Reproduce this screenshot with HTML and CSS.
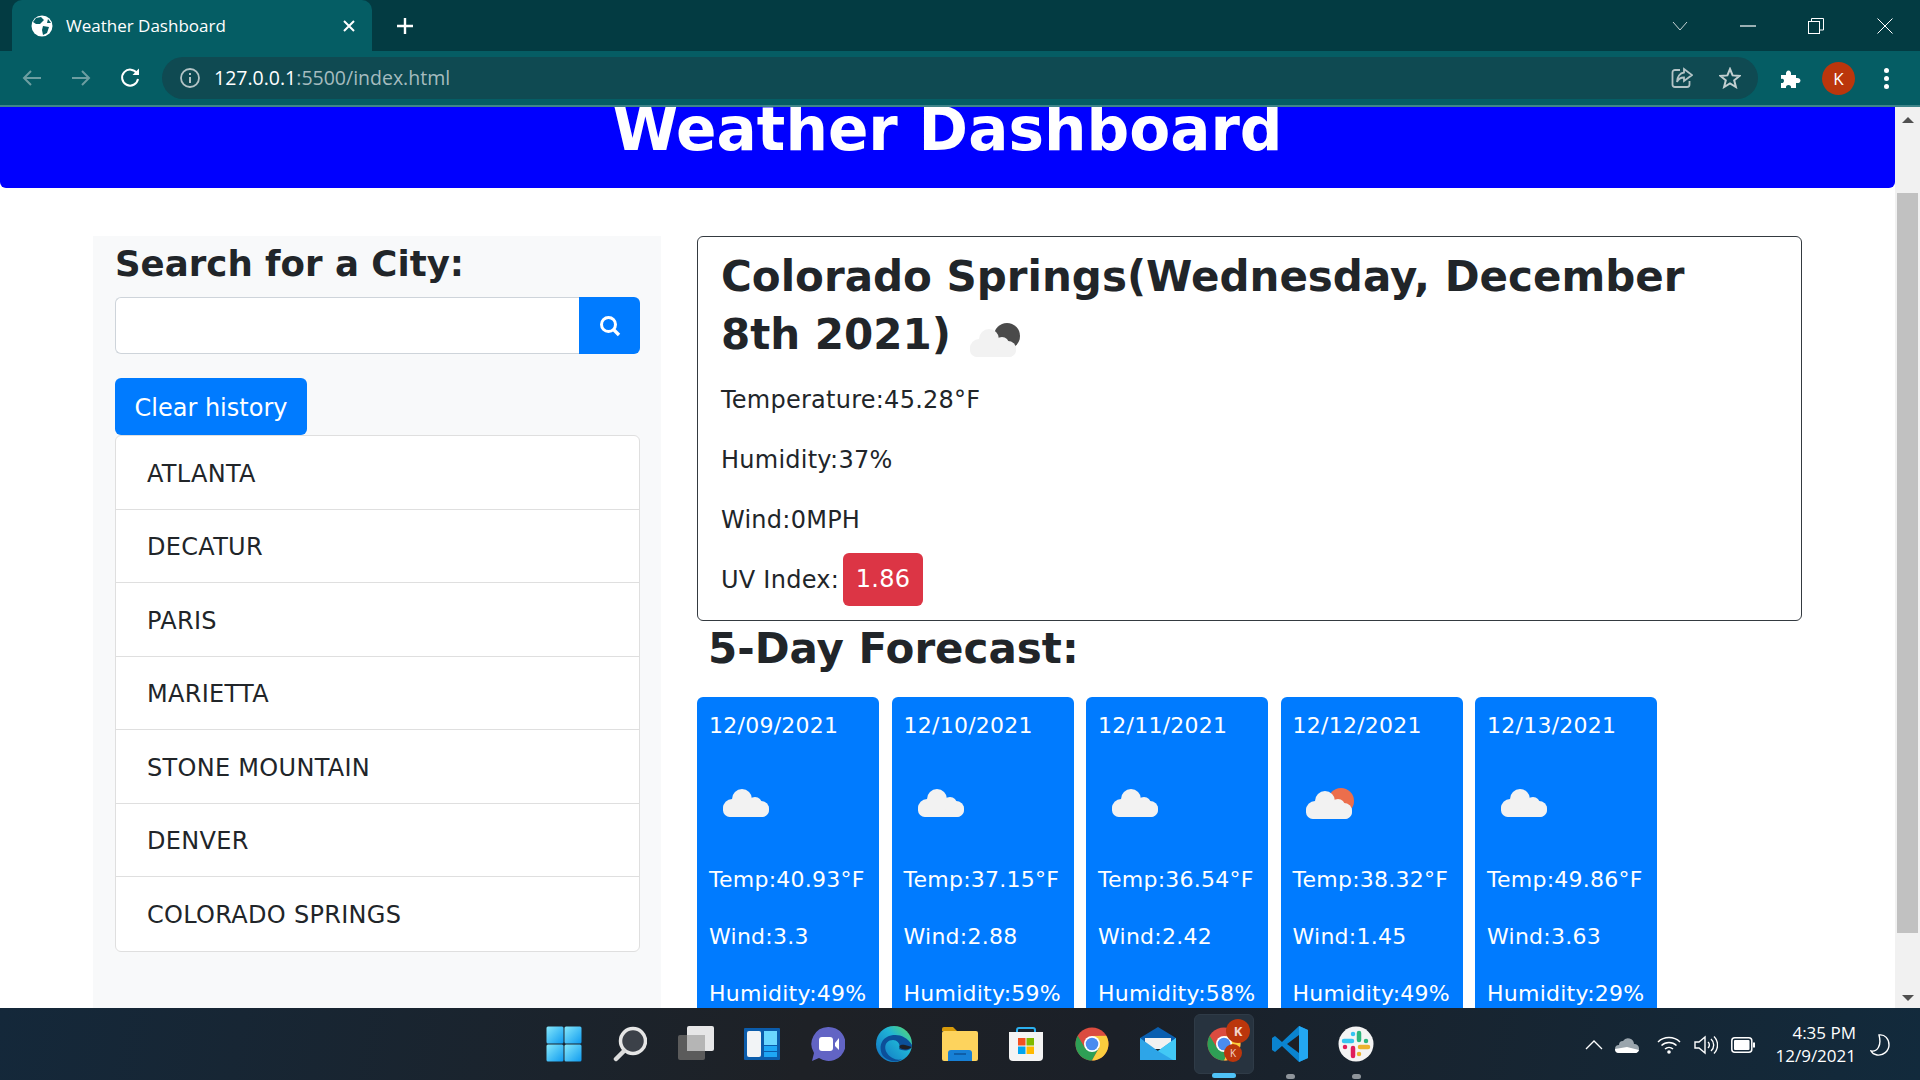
FILE: index.html
```html
<!DOCTYPE html>
<html lang="en">
<head>
    <meta charset="UTF-8">
    <title>Weather Dashboard</title>
    <link rel="stylesheet" href="styles.css">
</head>
<body>
    <svg class="defs" width="0" height="0">
        <defs>
            <g id="cloud">
                <rect x="0" y="13" width="46" height="15" rx="7"/>
                <circle cx="9" cy="19" r="9"/>
                <circle cx="19" cy="10" r="10"/>
                <circle cx="32" cy="15" r="7"/>
                <circle cx="38" cy="20" r="8"/>
            </g>
            <g id="chrome-logo">
                <circle cx="17" cy="17" r="16.5" fill="#db4c3f"/>
                <path d="M2.7 8.8 A16.5 16.5 0 0 0 17 33.5 L24 21 L10 21 Z" fill="#2e9f55"/>
                <path d="M31.3 8.8 A16.5 16.5 0 0 1 17 33.5 L24 21 L17 9 Z" fill="#fbcd3e"/>
                <circle cx="17" cy="17" r="8" fill="#fff"/>
                <circle cx="17" cy="17" r="6.3" fill="#4a8cf0"/>
            </g>
            <linearGradient id="win-grad" x1="0" y1="0" x2="1" y2="1">
                <stop offset="0" stop-color="#85e8fb"/>
                <stop offset="1" stop-color="#0f9bf0"/>
            </linearGradient>
            <linearGradient id="edge-grad" x1="0" y1="1" x2="1" y2="0">
                <stop offset="0" stop-color="#0f6cc0"/>
                <stop offset="0.6" stop-color="#1fb3d6"/>
                <stop offset="1" stop-color="#5fdc62"/>
            </linearGradient>
        </defs>
    </svg>

    <div class="tabstrip">
        <div class="tab">
            <svg class="tab-globe" width="22" height="22" viewBox="0 0 22 22">
                <circle cx="11" cy="11" r="10.5" fill="#fff"/>
                <path d="M5 3 L10 2 L13 5 L9 9 L5 9 L2 7 Z M12 11 L18 12 L16 18 L12 20 L11 15 Z M17 4 L20 8 L16 8 Z" fill="#055d64"/>
            </svg>
            <span class="tab-title">Weather Dashboard</span>
            <svg class="tab-close" width="12" height="12" viewBox="0 0 12 12"><path d="M1 1 L11 11 M11 1 L1 11" stroke="#fff" stroke-width="2"/></svg>
        </div>
        <svg class="new-tab" width="18" height="18" viewBox="0 0 18 18"><path d="M9 1 V17 M1 9 H17" stroke="#fff" stroke-width="2.4"/></svg>
        <div class="window-btns">
            <svg width="16" height="10" viewBox="0 0 16 10"><path d="M1 1 L8 9 L15 1" fill="none" stroke="#c8d4d6" stroke-width="1"/></svg>
            <svg class="win-min" width="16" height="2" viewBox="0 0 16 2"><path d="M0 1 H16" stroke="#fff" stroke-width="1.2"/></svg>
            <svg class="win-max" width="16" height="16" viewBox="0 0 16 16"><rect x="0.5" y="3.5" width="11" height="12" fill="none" stroke="#fff"/><path d="M3.5 3 V0.5 H15.5 V12 H12" fill="none" stroke="#fff"/></svg>
            <svg class="win-close" width="16" height="16" viewBox="0 0 16 16"><path d="M0.5 0.5 L15.5 15.5 M15.5 0.5 L0.5 15.5" stroke="#fff" stroke-width="1"/></svg>
        </div>
    </div>

    <div class="toolbar">
        <svg class="nav-btn" width="20" height="18" viewBox="0 0 20 18"><path d="M19 9 H2 M9 2 L2 9 L9 16" fill="none" stroke="#6d9ea1" stroke-width="2"/></svg>
        <svg class="nav-btn" width="20" height="18" viewBox="0 0 20 18"><path d="M1 9 H18 M11 2 L18 9 L11 16" fill="none" stroke="#6d9ea1" stroke-width="2"/></svg>
        <svg class="nav-btn" width="20" height="20" viewBox="0 0 20 20"><path d="M17 5.5 A8 8 0 1 0 18 11" fill="none" stroke="#fff" stroke-width="2"/><path d="M12.5 7 H19 V0.5 Z" fill="#fff"/></svg>
        <div class="omnibox">
            <svg width="20" height="20" viewBox="0 0 20 20"><circle cx="10" cy="10" r="9" fill="none" stroke="#b3c4c6" stroke-width="1.8"/><path d="M10 9 V15 M10 5 V7" stroke="#b3c4c6" stroke-width="2"/></svg>
            <span class="url"><span class="url-host">127.0.0.1</span>:5500/index.html</span>
            <svg class="omni-share" width="22" height="22" viewBox="0 0 22 22"><path d="M9 3 H4 A2.5 2.5 0 0 0 1.5 5.500 V17.500 A2.5 2.500 0 0 0 4 20 H16 A2.500 2.500 0 0 0 18.500 17.500 V14" fill="none" stroke="#b3c4c6" stroke-width="1.800"/><path d="M13 2 L21 8 L13 14 V10.500 C9 10.500 7 12.500 6 15 C6 10 9 6 13 5.500 Z" fill="none" stroke="#b3c4c6" stroke-width="1.800"/></svg>
            <svg class="omni-star" width="22" height="22" viewBox="0 0 22 22"><path d="M11 2 L13.600 8.400 L20.500 8.900 L15.200 13.300 L16.900 20 L11 16.400 L5.100 20 L6.800 13.300 L1.500 8.900 L8.400 8.400 Z" fill="none" stroke="#c2cfd0" stroke-width="2"/></svg>
        </div>
        <svg class="puzzle" width="22" height="22" viewBox="0 0 22 22"><path d="M1 8 H6 C5 2 12 2 11 8 H16 V11 C22 10 22 17 16 16 V21 H11 C12 17 5 17 6 21 H1 V16 C5 17 5 10 1 12 Z" fill="#fff"/></svg>
        <div class="avatar">K</div>
        <div class="kebab"><i></i><i></i><i></i></div>
    </div>

    <div class="viewport">
        <div class="page">
            <header class="page-header">
                <h1>Weather Dashboard</h1>
            </header>
            <div class="content">
                <aside class="sidebar">
                    <h3 class="search-title">Search for a City:</h3>
                    <div class="search-group">
                        <input class="search-input" type="text">
                        <button class="search-btn">
                            <svg width="22" height="22" viewBox="0 0 22 22"><circle cx="9.500" cy="9.500" r="7" fill="none" stroke="#fff" stroke-width="3"/><path d="M14.500 14.500 L20 20" stroke="#fff" stroke-width="3.400"/></svg>
                        </button>
                    </div>
                    <button class="clear-btn">Clear history</button>
                    <ul class="history">
                        <li>ATLANTA</li>
                        <li>DECATUR</li>
                        <li>PARIS</li>
                        <li>MARIETTA</li>
                        <li>STONE MOUNTAIN</li>
                        <li>DENVER</li>
                        <li>COLORADO SPRINGS</li>
                    </ul>
                </aside>
                <main class="weather">
                    <section class="current">
                        <h2>Colorado Springs(Wednesday, December 8th 2021)
                            <svg class="current-icon" width="50" height="34" viewBox="0 0 50 34">
                                <circle cx="37" cy="13" r="13" fill="#4a4a4a"/>
                                <use href="#cloud" x="0" y="6" fill="#f2f2f2"/>
                            </svg>
                        </h2>
                        <p>Temperature:45.28°F</p>
                        <p>Humidity:37%</p>
                        <p>Wind:0MPH</p>
                        <p class="uv-row">UV Index:<span class="uv-badge">1.86</span></p>
                    </section>
                    <h3 class="forecast-title">5-Day Forecast:</h3>
                    <div class="forecast">
                        <div class="day-card">
                            <p>12/09/2021</p>
                            <svg class="day-icon" width="100" height="97" viewBox="0 0 100 97"><use href="#cloud" x="14" y="23" fill="#f2f2f2"/></svg>
                            <p>Temp:40.93°F</p>
                            <p>Wind:3.3</p>
                            <p>Humidity:49%</p>
                        </div>
                        <div class="day-card">
                            <p>12/10/2021</p>
                            <svg class="day-icon" width="100" height="97" viewBox="0 0 100 97"><use href="#cloud" x="14" y="23" fill="#f2f2f2"/></svg>
                            <p>Temp:37.15°F</p>
                            <p>Wind:2.88</p>
                            <p>Humidity:59%</p>
                        </div>
                        <div class="day-card">
                            <p>12/11/2021</p>
                            <svg class="day-icon" width="100" height="97" viewBox="0 0 100 97"><use href="#cloud" x="14" y="23" fill="#f2f2f2"/></svg>
                            <p>Temp:36.54°F</p>
                            <p>Wind:2.42</p>
                            <p>Humidity:58%</p>
                        </div>
                        <div class="day-card">
                            <p>12/12/2021</p>
                            <svg class="day-icon" width="100" height="97" viewBox="0 0 100 97"><circle cx="48" cy="35" r="13" fill="#ec6e4c"/><use href="#cloud" x="13" y="25" fill="#f2f2f2"/></svg>
                            <p>Temp:38.32°F</p>
                            <p>Wind:1.45</p>
                            <p>Humidity:49%</p>
                        </div>
                        <div class="day-card">
                            <p>12/13/2021</p>
                            <svg class="day-icon" width="100" height="97" viewBox="0 0 100 97"><use href="#cloud" x="14" y="23" fill="#f2f2f2"/></svg>
                            <p>Temp:49.86°F</p>
                            <p>Wind:3.63</p>
                            <p>Humidity:29%</p>
                        </div>
                    </div>
                </main>
            </div>
        </div>
        <div class="scrollbar">
            <div class="scroll-arrow scroll-up"></div>
            <div class="scroll-thumb"></div>
            <div class="scroll-arrow scroll-down"></div>
        </div>
    </div>

    <footer class="taskbar">
        <div class="task-icons">
            <div class="task-item">
                <svg width="36" height="36" viewBox="0 0 36 36"><g fill="url(#win-grad)"><rect x="0.500" y="0.500" width="17" height="17" rx="1.500"/><rect x="18.500" y="0.500" width="17" height="17" rx="1.500"/><rect x="0.500" y="18.500" width="17" height="17" rx="1.500"/><rect x="18.500" y="18.500" width="17" height="17" rx="1.500"/></g></svg>
            </div>
            <div class="task-item">
                <svg width="34" height="36" viewBox="0 0 34 36"><circle cx="20" cy="15" r="12.500" fill="#3c4149" stroke="#e6e6e6" stroke-width="3.500"/><path d="M11 25 L3 33" stroke="#dcdcdc" stroke-width="4.500" stroke-linecap="round"/></svg>
            </div>
            <div class="task-item">
                <svg width="36" height="36" viewBox="0 0 36 36"><rect x="0" y="9" width="27" height="25" rx="2" fill="#5b5b5b"/><rect x="9" y="0" width="27" height="25" rx="2" fill="#f1f1f1" fill-opacity="0.95"/><rect x="9" y="9" width="18" height="16" fill="#b5b5b5"/></svg>
            </div>
            <div class="task-item">
                <svg width="36" height="33" viewBox="0 0 36 33"><rect width="36" height="32" rx="1" fill="#0b5cab"/><rect x="3" y="3" width="14" height="26" rx="2" fill="#f2f4f6"/><rect x="20" y="3" width="13" height="14" fill="#6ad7ff"/><rect x="20" y="18" width="13" height="5" fill="#1ea7f5"/><rect x="20" y="24" width="13" height="5" fill="#1ea7f5"/></svg>
            </div>
            <div class="task-item">
                <svg width="34" height="36" viewBox="0 0 34 36"><path d="M17 1 A17 17 0 1 1 8 32 L1 35 L3 27 A17 17 0 0 1 17 1 Z" fill="#6264c4"/><rect x="8" y="11" width="14" height="14" rx="3" fill="#fff"/><path d="M24 17 L28 12 V24 L24 20 Z" fill="#fff"/></svg>
            </div>
            <div class="task-item">
                <svg width="36" height="36" viewBox="0 0 36 36"><circle cx="18" cy="18" r="18" fill="url(#edge-grad)"/><path d="M36 19 C36 26 26 25 23 23 C25 19 22 14 17 14 C10 14 7 21 11 27 C14 32 21 35 26 33 C22 37 14 36 8 31 C3 26 3 15 11 11 C19 7 30 9 36 19 Z" fill="#0c4f99"/><path d="M36 21 C33 24 27 24 24 22 C22 19 26 18 29 19 Z" fill="#1d1f26"/></svg>
            </div>
            <div class="task-item">
                <svg width="36" height="34" viewBox="0 0 36 34"><path d="M0 2 A2 2 0 0 1 2 0 H11 L15 4 H0 Z" fill="#d79a0a"/><rect x="0" y="4" width="36" height="30" rx="2" fill="#fdd35d"/><path d="M6 34 V26 A3 3 0 0 1 9 23 H27 A3 3 0 0 1 30 26 V34 Z" fill="#1780d6"/><rect x="12" y="26" width="12" height="2" fill="#0e5ea8"/></svg>
            </div>
            <div class="task-item">
                <svg width="36" height="36" viewBox="0 0 36 36"><path d="M9 8 V4 A2 2 0 0 1 11 2 H25 A2 2 0 0 1 27 4 V8" fill="none" stroke="#2bb0ef" stroke-width="2"/><path d="M1 6 H35 V31 A4 4 0 0 1 31 35 H5 A4 4 0 0 1 1 31 Z" fill="#f4f4f4"/><rect x="10" y="12" width="7.500" height="7.500" fill="#f25022"/><rect x="18.500" y="12" width="7.500" height="7.500" fill="#7fba00"/><rect x="10" y="20.500" width="7.500" height="7.500" fill="#00a4ef"/><rect x="18.500" y="20.500" width="7.500" height="7.500" fill="#ffb900"/></svg>
            </div>
            <div class="task-item">
                <svg width="34" height="34" viewBox="0 0 34 34"><use href="#chrome-logo"/></svg>
            </div>
            <div class="task-item">
                <svg width="36" height="34" viewBox="0 0 36 34"><path d="M0 11 L18 0 L36 11 V14 H0 Z" fill="#0a5fb0"/><path d="M5 11 H31 V22 H5 Z" fill="#f1f1f1"/><path d="M0 11 L18 24 L36 11 V33 H0 Z" fill="#2da5e8"/><path d="M36 11 V33 H33 L18 24 Z" fill="#42c8f5"/></svg>
            </div>
            <div class="task-item is-active">
                <svg width="34" height="34" viewBox="0 0 34 34"><use href="#chrome-logo"/><rect x="18" y="22" width="13" height="11" fill="#fbcd3e"/></svg>
                <span class="task-badge task-badge-big">K</span>
                <span class="task-badge task-badge-small">K</span>
                <span class="task-dot task-dot-active"></span>
            </div>
            <div class="task-item">
                <svg width="36" height="36" viewBox="0 0 36 36"><path d="M27 0 L36 4 V32 L27 36 L10 20 L3 26 L0 24 V12 L3 10 L10 16 Z" fill="#0a84d0"/><path d="M27 0 L36 4 V32 L27 36 Z" fill="#23a7f2"/><path d="M27 9 V27 L15 18 Z" fill="#1d1f26"/></svg>
                <span class="task-dot"></span>
            </div>
            <div class="task-item">
                <svg width="36" height="36" viewBox="0 0 36 36"><circle cx="18" cy="18" r="17.500" fill="#f4f4f4"/><g stroke-width="4.500" stroke-linecap="round"><path d="M6 15 H14" stroke="#36c5f0"/><path d="M15 8 V8.100" stroke="#36c5f0"/><path d="M21 7 V14" stroke="#2eb67d"/><path d="M28 15 V15.100" stroke="#2eb67d"/><path d="M22 21 H30" stroke="#ecb22e"/><path d="M21 28 V28.100" stroke="#ecb22e"/><path d="M15 22 V30" stroke="#e01e5a"/><path d="M7 21 V21.100" stroke="#e01e5a"/></g></svg>
                <span class="task-dot"></span>
            </div>
        </div>
        <div class="tray">
            <svg class="tray-caret" width="18" height="10" viewBox="0 0 18 10"><path d="M1 9 L9 1 L17 9" fill="none" stroke="#fff" stroke-width="1.300"/></svg>
            <svg class="tray-cloud" width="24" height="16" viewBox="0 0 24 16"><path d="M4 8 A4 4 0 0 1 8 4 A6 6 0 0 1 19 7 A4.500 4.500 0 0 1 24 11 A4.500 4.500 0 0 1 19 16 H4 A4 4 0 0 1 4 8 Z" fill="#9aa5ad"/><path d="M0 12 L12 10 L24 13 A4 4 0 0 1 19 16 H4 A4 4 0 0 1 0 12 Z" fill="#fff"/></svg>
            <svg class="tray-wifi" width="24" height="18" viewBox="0 0 24 18"><path d="M1 6 A16 16 0 0 1 23 6 M4.500 9.500 A11 11 0 0 1 19.500 9.500 M8 13 A6 6 0 0 1 16 13" fill="none" stroke="#fff" stroke-width="1.500"/><circle cx="12" cy="16" r="1.800" fill="#fff"/></svg>
            <svg class="tray-sound" width="24" height="20" viewBox="0 0 24 20"><path d="M1 7 H5 L11 2 V18 L5 13 H1 Z" fill="none" stroke="#fff" stroke-width="1.400"/><path d="M14 7 A4 4 0 0 1 14 13 M17 4 A8 8 0 0 1 17 16 M20 1.500 A12 12 0 0 1 20 18.500" fill="none" stroke="#fff" stroke-width="1.400"/></svg>
            <svg class="tray-battery" width="24" height="16" viewBox="0 0 24 16"><rect x="0.800" y="0.800" width="20" height="14.400" rx="3" fill="none" stroke="#fff" stroke-width="1.500"/><rect x="3" y="3" width="15.500" height="10" rx="1" fill="#fff"/><rect x="22" y="5.500" width="2" height="5" fill="#fff"/></svg>
            <div class="clock">
                <span>4:35 PM</span>
                <span>12/9/2021</span>
            </div>
            <svg class="tray-moon" width="20" height="22" viewBox="0 0 20 22"><path d="M9 1 C15 0 19 5 19 11 C19 17 13 22 7 21 C4 20.500 2 19 1 17 C7 18 12 12 9 1 Z" fill="none" stroke="#fff" stroke-width="1.400"/></svg>
        </div>
    </footer>
</body>
</html>
```

FILE: styles.css
```css
* {
    box-sizing: border-box;
}
html, body {
    margin: 0;
    height: 100%;
    overflow: hidden;
}
body {
    display: flex;
    flex-direction: column;
    font-family: "DejaVu Sans", Verdana, sans-serif;
    font-size: 24px;
    line-height: 1.5;
    color: #212529;
    background: #fff;
}
.defs {
    position: absolute;
}

/* browser chrome */
.tabstrip {
    height: 51px;
    flex: none;
    display: flex;
    align-items: center;
    background: #033b42;
    font-family: "Open Sans", "Noto Sans", sans-serif;
}
.tab {
    width: 360px;
    height: 51px;
    margin-left: 12px;
    padding: 0 17px 0 19px;
    display: flex;
    align-items: center;
    background: #055d64;
    border-radius: 10px 10px 0 0;
}
.tab-title {
    margin-left: 13px;
    flex: 1;
    color: #fff;
    font-size: 17px;
}
.new-tab {
    margin-left: 24px;
}
.window-btns {
    margin-left: auto;
    display: flex;
    align-items: center;
    padding-right: 27px;
    height: 42px;
}
.win-min {
    margin-left: 52px;
}
.win-max {
    margin-left: 52px;
}
.win-close {
    margin-left: 53px;
}
.toolbar {
    height: 56px;
    flex: none;
    display: flex;
    align-items: center;
    padding: 0 0 0 22px;
    background: #055d64;
    border-bottom: 2px solid #3e8489;
    font-family: "Open Sans", "Noto Sans", sans-serif;
}
.nav-btn {
    margin-right: 29px;
}
.omnibox {
    width: 1596px;
    height: 42px;
    margin-left: -7px;
    padding: 0 5px 0 18px;
    display: flex;
    align-items: center;
    background: #0f4a52;
    border-radius: 21px;
}
.url {
    margin-left: 14px;
    font-size: 19.5px;
    color: #a5bcbf;
}
.url-host {
    color: #fff;
}
.omni-share {
    margin-left: auto;
}
.omni-star {
    margin-left: 26px;
    margin-right: 12px;
}
.puzzle {
    margin-left: 22px;
}
.avatar {
    width: 33px;
    height: 33px;
    margin-left: 20px;
    border-radius: 50%;
    background: #bb360c;
    color: #fff;
    font-size: 17px;
    line-height: 33px;
    text-align: center;
}
.kebab {
    margin-left: 29px;
    display: flex;
    flex-direction: column;
    gap: 3px;
}
.kebab i {
    width: 5px;
    height: 5px;
    border-radius: 50%;
    background: #fff;
}

/* page */
.viewport {
    flex: 1;
    min-height: 0;
    display: flex;
    overflow: hidden;
}
.page {
    flex: 1;
    min-width: 0;
    overflow: hidden;
}
.page-header {
    height: 81px;
    overflow: hidden;
    background: #00f;
    border-radius: 0 0 6px 6px;
    color: #fff;
    text-align: center;
}
.page-header h1 {
    margin: -22px 0 0;
    font-size: 59.7px;
    line-height: 1.5;
    font-weight: 700;
}
.content {
    display: flex;
    gap: 36px;
    padding: 48px 93px 0 93px;
}
.sidebar {
    width: 568px;
    height: 800px;
    flex: none;
    padding: 8px 21px 0 22px;
    background: #f8f9fa;
}
.search-title {
    margin: 0 0 13px;
    font-size: 35.6px;
    line-height: 40px;
    font-weight: 700;
}
.search-group {
    display: flex;
    height: 57px;
    margin-bottom: 24px;
}
.search-input {
    flex: 1;
    min-width: 0;
    background: #fff;
    border: 1.5px solid #ced4da;
    border-right: none;
    border-radius: 6px 0 0 6px;
}
.search-btn {
    width: 61px;
    display: flex;
    align-items: center;
    justify-content: center;
    background: #007bff;
    border: none;
    border-radius: 0 6px 6px 0;
}
.clear-btn {
    display: block;
    width: 192px;
    height: 57px;
    padding: 2px 0 0;
    background: #007bff;
    color: #fff;
    border: none;
    border-radius: 6px;
    font-family: inherit;
    font-size: 24px;
}
.history {
    margin: 0;
    padding: 0;
    list-style: none;
    background: #fff;
    border: 1px solid #dfdfdf;
    border-radius: 6px;
}
.history li {
    height: 73.500px;
    padding: 19.500px 30px 0 31px;
    letter-spacing: 0.3px;
    border-bottom: 1px solid #dfdfdf;
}
.history li:last-child {
    border-bottom: none;
}
.weather {
    flex: 1;
    min-width: 0;
}
.current {
    height: 385px;
    padding: 11px 23px 0;
    border: 1px solid #343a40;
    border-radius: 6px;
}
.current h2 {
    margin: 0 0 18px;
    font-size: 42px;
    line-height: 58px;
    font-weight: 700;
}
.current-icon {
    margin-left: 4px;
    vertical-align: -8px;
}
.current p {
    margin: 0 0 24px;
    letter-spacing: 0.25px;
}
.uv-row {
    display: flex;
    align-items: center;
    height: 36px;
}
.uv-badge {
    flex: none;
    width: 80px;
    height: 53px;
    margin: -2px 0 0 4px;
    background: #dc3545;
    border-radius: 6px;
    color: #fff;
    line-height: 53px;
    text-align: center;
}
.forecast-title {
    margin: 4px 0 0 11px;
    font-size: 42px;
    line-height: 48px;
    font-weight: 700;
}
.forecast {
    display: flex;
    gap: 12.500px;
    margin-top: 24px;
}
.day-card {
    width: 182px;
    height: 400px;
    padding: 12px;
    background: #007bff;
    border-radius: 6px;
    color: #fff;
    font-size: 22px;
    letter-spacing: 0.25px;
}
.day-card p {
    margin: 0 0 24px;
    white-space: nowrap;
}
.day-icon {
    display: block;
}
.scrollbar {
    width: 25px;
    flex: none;
    position: relative;
    background: #f1f1f1;
}
.scroll-thumb {
    position: absolute;
    left: 2px;
    right: 2px;
    top: 86px;
    height: 740px;
    background: #c1c1c1;
}
.scroll-arrow {
    position: absolute;
    left: 7px;
    width: 0;
    height: 0;
    border-left: 6px solid transparent;
    border-right: 6px solid transparent;
}
.scroll-up {
    top: 10px;
    border-bottom: 6px solid #505050;
}
.scroll-down {
    bottom: 7px;
    border-top: 6px solid #505050;
}

/* windows taskbar */
.taskbar {
    height: 72px;
    flex: none;
    display: flex;
    align-items: center;
    background: linear-gradient(100deg, #14283a 0%, #1e2126 42%, #1b2028 58%, #122a3c 100%);
    color: #fff;
}
.task-icons {
    display: flex;
    margin-left: 531px;
}
.task-item {
    width: 66px;
    height: 60px;
    position: relative;
    display: flex;
    align-items: center;
    justify-content: center;
}
.task-item.is-active {
    background: #27333f;
    border: 1px solid #2f3b47;
    border-radius: 6px;
    width: 60px;
    margin: 0 3px;
}
.task-badge {
    position: absolute;
    border-radius: 50%;
    background: #bb360c;
    color: #f4d6cc;
    text-align: center;
    font-family: "Open Sans", sans-serif;
}
.task-badge-big {
    top: 4px;
    right: 3px;
    width: 24px;
    height: 24px;
    font-size: 13px;
    line-height: 24px;
    font-weight: 700;
}
.task-badge-small {
    top: 29px;
    right: 11px;
    width: 18px;
    height: 18px;
    font-size: 10px;
    line-height: 18px;
}
.task-dot {
    position: absolute;
    left: 50%;
    bottom: -5px;
    width: 9px;
    height: 5px;
    margin-left: -4.500px;
    border-radius: 3px;
    background: #8f959b;
}
.task-dot-active {
    width: 24px;
    margin-left: -12px;
    background: #4fc3f7;
}
.tray {
    width: 343px;
    flex: none;
    margin-left: auto;
    display: flex;
    align-items: center;
    font-family: "Open Sans", "Noto Sans", sans-serif;
}
.tray svg {
    position: relative;
    top: 1px;
}
.tray-caret {
    margin-left: 8px;
}
.tray-cloud {
    margin-left: 12px;
}
.tray-wifi {
    margin-left: 18px;
}
.tray-sound {
    margin-left: 13px;
}
.tray-battery {
    margin-left: 13px;
}
.clock {
    width: 92px;
    margin-left: 9px;
    display: flex;
    flex-direction: column;
    align-items: flex-end;
    font-size: 17px;
    line-height: 23px;
}
.tray-moon {
    margin-left: 14px;
}
```
